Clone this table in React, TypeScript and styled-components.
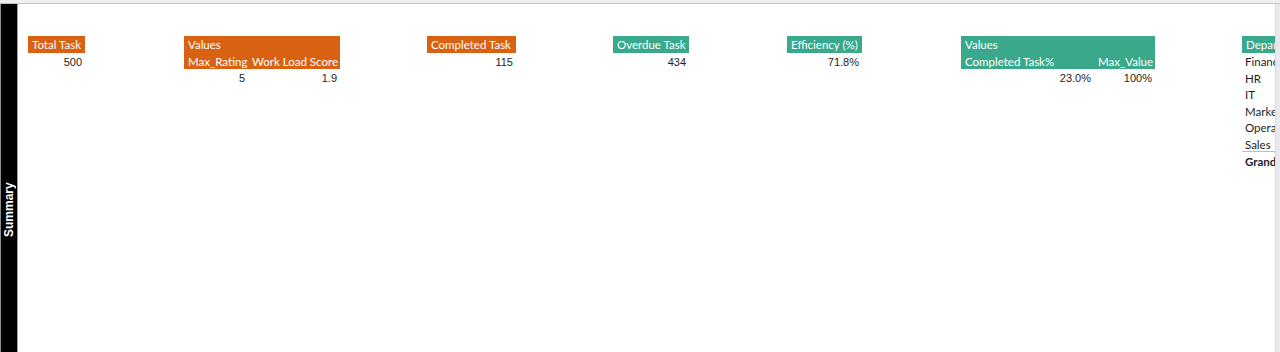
import React from "react";
import styled, { createGlobalStyle } from "styled-components";

const ORANGE = "#d86211";
const TEAL = "#3aa98b";

const GlobalStyle = createGlobalStyle`
  html, body { margin: 0; padding: 0; background: #ffffff; }
  #root { width: 1280px; height: 352px; overflow: hidden; }
`;

const Frame = styled.div`
  display: flex;
  flex-direction: column;
  width: 1280px;
  height: 352px;
  background: #ffffff;
`;

const TopStrip = styled.div`
  height: 3px;
  flex-shrink: 0;
  background: #efefef;
  border-bottom: 1px solid #c4c4c4;
`;

const Body = styled.div`
  flex: 1;
  display: flex;
  min-height: 0;
`;

const LeftEdge = styled.div`
  width: 1px;
  flex-shrink: 0;
  background: #8c8c8c;
`;

const SideBar = styled.div`
  width: 17px;
  flex-shrink: 0;
  background: #000000;
  border-right: 1px solid #a0a0a0;
  display: flex;
  justify-content: center;
  padding-top: 177px;
  box-sizing: border-box;
`;

const SideLabel = styled.span`
  writing-mode: vertical-rl;
  transform: rotate(180deg);
  color: #ffffff;
  font-family: "Liberation Sans", Arial, sans-serif;
  font-weight: bold;
  font-size: 12px;
  line-height: 14px;
  height: 56px;
`;

const Sheet = styled.div`
  flex: 1;
  display: flex;
  align-items: flex-start;
  padding-top: 32px;
  overflow: hidden;
  min-width: 0;
`;

const ScrollEdge = styled.div`
  width: 4px;
  flex-shrink: 0;
  background: #e9e9ef;
  border-left: 1px solid #dadae2;
`;

const Block = styled.div<{ $offset: number; $cols: string }>`
  flex-shrink: 0;
  margin-left: ${(p) => p.$offset}px;
  display: grid;
  grid-template-columns: ${(p) => p.$cols};
  grid-auto-rows: 16.6px;
`;

const Head = styled.div<{ $bg: string; $span?: number }>`
  grid-column: span ${(p) => p.$span ?? 1};
  background: ${(p) => p.$bg};
  color: #ffffff;
  font-family: Lato, "Open Sans", sans-serif;
  font-size: 11.5px;
  line-height: 16px;
  padding: 1px 0 0 4px;
  white-space: nowrap;
  overflow: hidden;
`;

const Num = styled.div`
  color: #1e1e1e;
  font-family: "Liberation Sans", Arial, sans-serif;
  font-size: 11px;
  line-height: 15px;
  text-align: right;
  padding: 2px 3px 0 0;
  white-space: nowrap;
`;

const Label = styled.div<{ $bold?: boolean; $rule?: boolean }>`
  color: #1e1e1e;
  font-family: Lato, "Open Sans", sans-serif;
  font-size: 11.5px;
  font-weight: ${(p) => (p.$bold ? 700 : 400)};
  line-height: 15px;
  padding: 1.5px 0 0 3px;
  white-space: nowrap;
  overflow: hidden;
  box-sizing: border-box;
  border-bottom: ${(p) => (p.$rule ? `1.5px solid #96d2c1` : "0 solid transparent")};
`;

const Card = ({ offset, width, title, value, color }: { offset: number; width: number; title: string; value: string; color: string }) => (
  <Block $offset={offset} $cols={`${width}px`}>
    <Head $bg={color}>{title}</Head>
    <Num>{value}</Num>
  </Block>
);

const departments = ["Finance", "HR", "IT", "Marketing", "Operations", "Sales"];

export default function App() {
  return (
    <>
      <GlobalStyle />
      <Frame>
        <TopStrip />
        <Body>
          <LeftEdge />
          <SideBar>
            <SideLabel>Summary</SideLabel>
          </SideBar>
          <Sheet>
            <Card offset={10} width={57} title="Total Task" value="500" color={ORANGE} />
            <Block $offset={99} $cols="64px 92px">
              <Head $bg={ORANGE} $span={2}>Values</Head>
              <Head $bg={ORANGE}>Max_Rating</Head>
              <Head $bg={ORANGE}>Work Load Score</Head>
              <Num>5</Num>
              <Num>1.9</Num>
            </Block>
            <Card offset={87} width={89} title="Completed Task" value="115" color={ORANGE} />
            <Card offset={97} width={76} title="Overdue Task" value="434" color={TEAL} />
            <Card offset={98} width={75} title="Efficiency (%)" value="71.8%" color={TEAL} />
            <Block $offset={99} $cols="133px 61px">
              <Head $bg={TEAL} $span={2}>Values</Head>
              <Head $bg={TEAL}>Completed Task%</Head>
              <Head $bg={TEAL}>Max_Value</Head>
              <Num>23.0%</Num>
              <Num>100%</Num>
            </Block>
            <Block $offset={87} $cols="90px">
              <Head $bg={TEAL}>Department</Head>
              {departments.map((d, i) => (
                <Label key={d} $rule={i === departments.length - 1}>{d}</Label>
              ))}
              <Label $bold>Grand Total</Label>
            </Block>
          </Sheet>
          <ScrollEdge />
        </Body>
      </Frame>
    </>
  );
}
